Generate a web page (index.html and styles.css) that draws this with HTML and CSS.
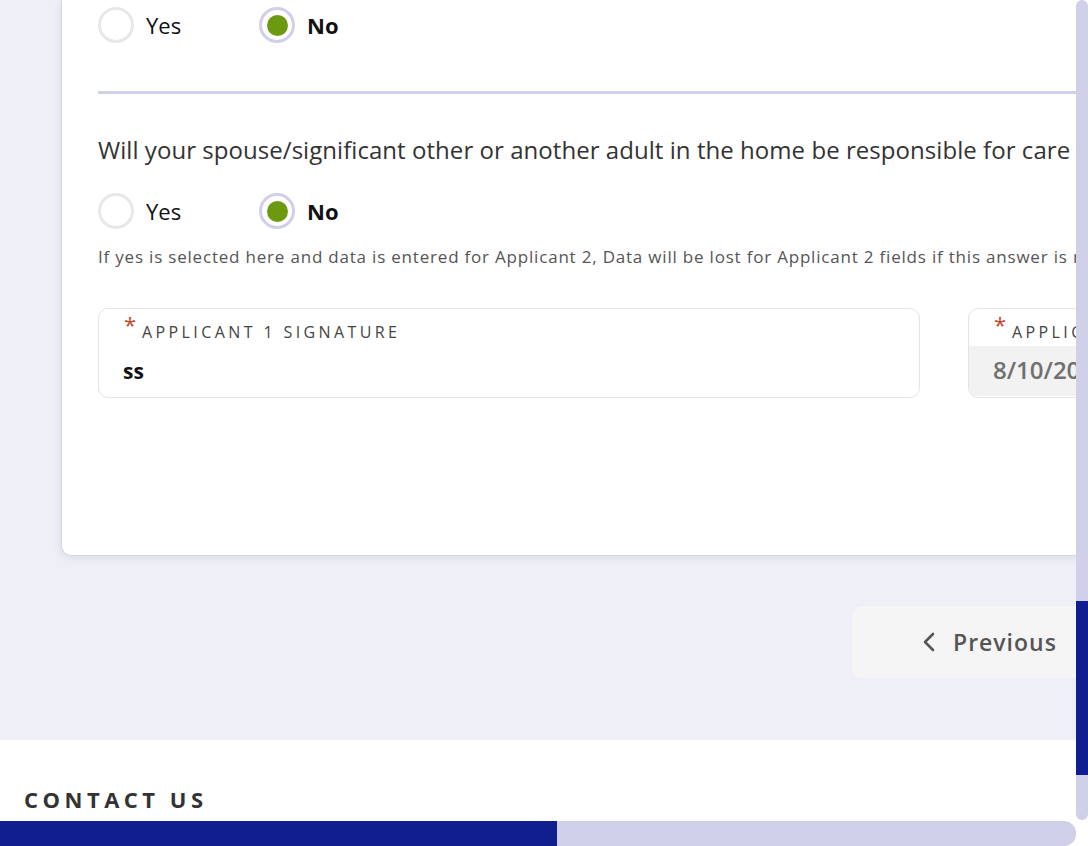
FILE: index.html
```html
<!DOCTYPE html>
<html lang="en">
<head>
<meta charset="utf-8">
<title>Application</title>
<link rel="stylesheet" href="styles.css">
</head>
<body>
<div class="viewport">
  <div class="scroll-area">
    <div class="page">
      <section class="card">
        <div class="radio-row first">
          <label class="option"><span class="radio"></span><span class="opt-text">Yes</span></label>
          <label class="option checked"><span class="radio"></span><span class="opt-text">No</span></label>
        </div>
        <hr class="divider">
        <p class="question">Will your spouse/significant other or another adult in the home be responsible for care of the child?</p>
        <div class="radio-row second">
          <label class="option"><span class="radio"></span><span class="opt-text">Yes</span></label>
          <label class="option checked"><span class="radio"></span><span class="opt-text">No</span></label>
        </div>
        <p class="helper">If yes is selected here and data is entered for Applicant 2, Data will be lost for Applicant 2 fields if this answer is modified.</p>
        <div class="fields">
          <div class="field">
            <div class="field-label"><span class="req">*</span><span class="label-text">APPLICANT 1 SIGNATURE</span></div>
            <div class="field-value">ss</div>
          </div>
          <div class="field">
            <div class="field-label"><span class="req">*</span><span class="label-text">APPLICANT 1 DATE</span></div>
            <div class="field-value readonly">8/10/2023</div>
          </div>
        </div>
      </section>
      <div class="nav-row">
        <button class="btn-prev" type="button">
          <svg class="chev" width="12" height="20" viewBox="0 0 12 20"><polyline points="10,2 2,10 10,18" fill="none" stroke="#555" stroke-width="2.6" stroke-linecap="round" stroke-linejoin="round"/></svg>
          <span>Previous</span>
        </button>
      </div>
    </div>
    <footer class="footer">
      <h2 class="footer-title">CONTACT US</h2>
    </footer>
  </div>
  <div class="vscroll"><div class="vtrack"><div class="vthumb"></div></div></div>
  <div class="hscroll"><div class="htrack"><div class="hthumb"></div></div></div>
  <div class="corner"></div>
</div>
</body>
</html>
```

FILE: styles.css
```css
* { box-sizing: border-box; }
html, body { margin: 0; padding: 0; }
body {
  font-family: "Open Sans", "Noto Sans", sans-serif;
  background: #ffffff;
  color: #222;
}
.viewport {
  width: 1088px;
  height: 846px;
  display: grid;
  grid-template-columns: 1076px 12px;
  grid-template-rows: 821px 25px;
  overflow: hidden;
}
.scroll-area {
  overflow: hidden;
  background: #efeff7;
}
.page {
  width: 1400px;
  padding-left: 61px;
}
.card {
  width: 1200px;
  background: #fff;
  border: 1px solid #d6d6de;
  border-top: none;
  border-radius: 0 0 10px 10px;
  box-shadow: 0 2px 8px rgba(60, 60, 120, 0.10);
  padding: 7px 0 157px 36px;
}
.radio-row {
  display: flex;
  align-items: center;
  height: 36px;
}
.option {
  width: 161px;
  display: flex;
  align-items: center;
  gap: 12px;
}
.radio {
  width: 36px;
  height: 36px;
  border-radius: 50%;
  border: 3px solid #e8e8e8;
  display: grid;
  place-items: center;
  flex: none;
}
.checked .radio { border-color: #d0d1e8; }
.checked .radio::after {
  content: "";
  width: 21px;
  height: 21px;
  border-radius: 50%;
  background: #6b990f;
}
.opt-text {
  font-size: 22px;
  color: #111;
}
.checked .opt-text { font-weight: 700; }
.divider {
  border: none;
  height: 3px;
  background: #d0d1e8;
  margin: 48px 0 0 0;
}
.question {
  margin: 40px 0 0 0;
  font-size: 24px;
  line-height: 32px;
  letter-spacing: 0.05px;
  color: #333;
  white-space: nowrap;
}
.radio-row.second { margin-top: 27px; }
.helper {
  margin: 16px 0 0 0;
  font-size: 17px;
  line-height: 24px;
  color: #555;
  white-space: nowrap;
  letter-spacing: 0.8px;
}
.fields {
  display: flex;
  gap: 48px;
  margin-top: 39px;
}
.field {
  width: 822px;
  height: 90px;
  flex: none;
  border: 1px solid #e4e4e4;
  border-radius: 10px;
  overflow: hidden;
  display: flex;
  flex-direction: column;
}
.field-label {
  display: flex;
  align-items: flex-start;
  padding: 4px 0 0 25px;
  height: 37px;
}
.req {
  color: #c0462a;
  font-size: 22px;
  line-height: 22px;
  width: 18px;
}
.label-text {
  margin-top: 9px;
  font-size: 16px;
  line-height: 20px;
  letter-spacing: 3.4px;
  color: #444;
}
.field-value {
  flex: 1;
  padding: 3px 0 0 24px;
  font-size: 21px;
  font-weight: 700;
  color: #111;
  line-height: 44px;
}
.field-value.readonly {
  padding-top: 0;
  background: #f2f2f2;
  color: #707070;
  font-size: 24px;
  font-weight: 600;
  margin-bottom: 1px;
  line-height: 48px;
}
.nav-row {
  padding: 50px 0 62px 791px;
}
.btn-prev {
  width: 300px;
  height: 72px;
  border: none;
  border-radius: 10px;
  background: #f5f5f5;
  display: flex;
  align-items: center;
  padding: 0 0 0 71px;
  gap: 18px;
  font-family: inherit;
  font-size: 23px;
  font-weight: 600;
  color: #555;
  letter-spacing: 1px;
}
.chev { flex: none; }
.footer {
  background: #fff;
  height: 200px;
  padding: 44px 24px 0;
}
.footer-title {
  margin: 0;
  font-size: 22px;
  font-weight: 700;
  letter-spacing: 4.5px;
  color: #333;
}
.vscroll { background: #fff; }
.vtrack {
  height: 820px;
  background: #d0d1e8;
  border-radius: 6px;
  padding-top: 601px;
}
.vthumb {
  height: 174px;
  background: #111e8f;
}
.hscroll { background: #fff; }
.htrack {
  height: 25px;
  background: #d0d1e8;
  border-radius: 0 12px 12px 0;
}
.hthumb {
  width: 557px;
  height: 25px;
  background: #111e8f;
}
.corner { background: #fff; }
```
